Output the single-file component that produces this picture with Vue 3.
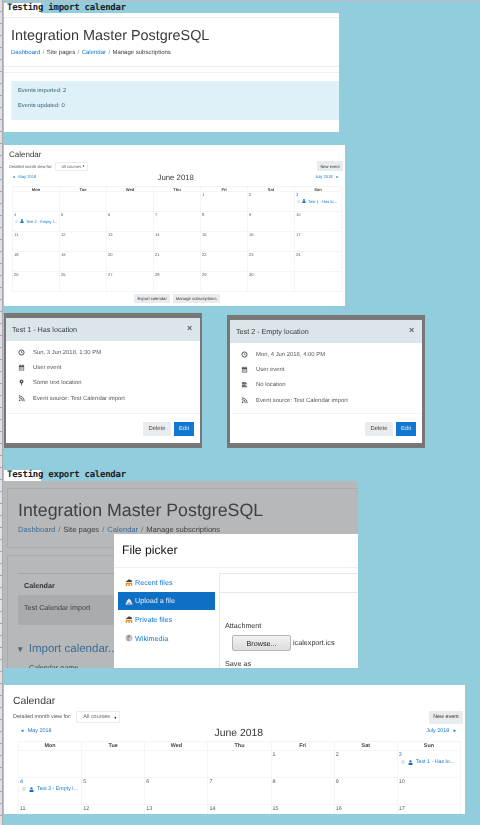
<script setup>
const days = [
  '', '', '', '', 1, 2, 3,
  4, 5, 6, 7, 8, 9, 10,
  11, 12, 13, 14, 15, 16, 17,
  18, 19, 20, 21, 22, 23, 24,
  25, 26, 27, 28, 29, 30, ''
]
const headers = ['Mon', 'Tue', 'Wed', 'Thu', 'Fri', 'Sat', 'Sun']
const modals = [
  {
    key: 'first', title: 'Test 1 - Has location',
    rows: [
      ['clock', 'Sun, 3 Jun 2018, 1:30 PM'],
      ['cal', 'User event'],
      ['pin', 'Some text location'],
      ['rss', 'Event source: Test Calendar import']
    ]
  },
  {
    key: 'second', title: 'Test 2 - Empty location',
    rows: [
      ['clock', 'Mon, 4 Jun 2018, 4:00 PM'],
      ['cal', 'User event'],
      ['list', 'No location'],
      ['rss', 'Event source: Test Calendar import']
    ]
  }
]
const pickerItems = [
  { label: 'Recent files', icon: 'folder' },
  { label: 'Upload a file', icon: 'upload', active: true },
  { label: 'Private files', icon: 'folder' },
  { label: 'Wikimedia', icon: 'globe' }
]
</script>

<template>
  <div class="screen">
    <div class="ruler-left"></div>
    <main class="doc">
      <div class="ruler-top"></div>

      <div class="label"><span class="label-white">Testing import calendar</span></div>
      <section class="card result">
        <div class="result-head">
          <h1>Integration Master PostgreSQL</h1>
          <nav class="crumbs">
            <a>Dashboard</a><i>/</i><span>Site pages</span><i>/</i><a>Calendar</a><i>/</i><span>Manage subscriptions</span>
          </nav>
        </div>
        <div class="result-rule"></div>
        <div class="alert">
          <p>Events imported: 2</p>
          <p>Events updated: 0</p>
        </div>
      </section>

      <section class="card cal cal-small">
        <h2>Calendar</h2>
        <div class="cal-tools">
          <span>Detailed month view for:</span>
          <span class="select">All courses <b>♦</b></span>
          <span class="new-event">New event</span>
        </div>
        <div class="cal-nav">
          <a class="prev"><b>◄</b> May 2018</a>
          <span class="month">June 2018</span>
          <a class="next">July 2018 <b>►</b></a>
        </div>
        <div class="grid">
          <div v-for="h in headers" :key="h" class="head">{{ h }}</div>
          <div v-for="(d, i) in days" :key="i" class="cell">
            <span class="num" :class="{ link: d === 3 || d === 4 }">{{ d }}</span>
            <div v-if="d === 3 || d === 4" class="event">
              <span class="dot"></span>
              <svg class="person" viewBox="0 0 10 10"><circle cx="5" cy="2.6" r="2.3" /><path d="M1 10V7.6C1 6.2 2.2 5.4 3.4 5.2L5 6.4 6.6 5.2C7.8 5.4 9 6.2 9 7.6V10Z" /></svg>
              <span class="ev-text">{{ d === 3 ? 'Test 1 - Has lo...' : 'Test 2 - Empty l...' }}</span>
            </div>
          </div>
        </div>
        <div class="cal-foot">
          <span class="btn-soft">Export calendar</span>
          <span class="btn-soft">Manage subscriptions</span>
        </div>
      </section>

      <div class="modals">
        <article v-for="m in modals" :key="m.key" class="modal" :class="m.key">
          <header>
            <span>{{ m.title }}</span>
            <span class="close">×</span>
          </header>
          <div class="modal-body">
            <div v-for="r in m.rows" :key="r[1]" class="mrow">
              <svg viewBox="0 0 12 12" class="micon">
                <g v-if="r[0] === 'clock'"><circle cx="6" cy="6" r="4.4" fill="none" stroke="currentColor" stroke-width="1.6" /><path d="M6 3.4V6.3H8" fill="none" stroke="currentColor" stroke-width="1.1" /></g>
                <g v-else-if="r[0] === 'cal'"><path d="M1.5 2.4H10.5V11H1.5Z" /><path d="M3 1H4.2V3H3ZM7.8 1H9V3H7.8Z" /><path d="M2.6 5H9.4V10H2.6Z" fill="#fff" /><path d="M3.4 5.8H4.8V7H3.4ZM5.4 5.8H6.8V7H5.4ZM7.4 5.8H8.6V7H7.4ZM3.4 7.8H4.8V9H3.4ZM5.4 7.8H6.8V9H5.4ZM7.4 7.8H8.6V9H7.4Z" /></g>
                <g v-else-if="r[0] === 'pin'"><path d="M6 .8A3.3 3.3 0 0 0 2.7 4.1C2.7 6 4.2 7 5.4 7.8V11.2H6.6V7.8C7.8 7 9.3 6 9.3 4.1A3.3 3.3 0 0 0 6 .8Z" /><circle cx="6" cy="3.9" r="1.2" fill="#fff" /></g>
                <g v-else-if="r[0] === 'list'"><path d="M1.5 1.5H8.2V3H1.5ZM1.5 4H10V5.5H1.5ZM1.5 6.5H8.2V8H1.5ZM1.5 9H10.4V10.5H1.5Z" /></g>
                <g v-else><circle cx="2.8" cy="9.2" r="1.4" /><path d="M1.4 4.4A6.2 6.2 0 0 1 7.6 10.6M1.4 1.4A9.2 9.2 0 0 1 10.6 10.6" fill="none" stroke="currentColor" stroke-width="1.5" /></g>
              </svg>
              <span>{{ r[1] }}</span>
            </div>
          </div>
          <footer>
            <span class="m-btn">Delete</span>
            <span class="m-btn primary">Edit</span>
          </footer>
        </article>
      </div>

      <div class="label second-label"><span class="label-white">Testing export calendar</span></div>
      <section class="dim">
        <div class="dim-card dim-head">
          <h1>Integration Master PostgreSQL</h1>
          <nav class="crumbs">
            <a>Dashboard</a><i>/</i><span>Site pages</span><i>/</i><a>Calendar</a><i>/</i><span>Manage subscriptions</span>
          </nav>
        </div>
        <div class="dim-card dim-main">
          <div class="dim-th">Calendar</div>
          <div class="dim-td">Test Calendar import</div>
          <div class="dim-import"><b>▾</b> Import calendar...</div>
          <div class="dim-name">Calendar name</div>
        </div>

        <div class="picker">
          <div class="picker-title">File picker</div>
          <div class="picker-body">
            <ul class="picker-nav">
              <li v-for="p in pickerItems" :key="p.label" :class="{ active: p.active }">
                <svg viewBox="0 0 10 10" class="p-icon">
                  <g v-if="p.icon === 'folder'"><path d="M1 6H9V10H7.4V7.6H6V10H4.2V7.6H2.8V10H1Z" fill="#f08a24" /><path d="M.6 5 5 1.6 8.6 3.2V5H3Z" fill="#444" /></g>
                  <g v-else-if="p.icon === 'upload'"><path d="M.5 9.5 3 4 5 2 7 4 9.5 9.5Z" fill="#e9eef2" /><path d="M1.8 9.5 5 6 8.2 9.5Z" fill="#8aa0b4" /></g>
                  <g v-else><circle cx="5" cy="5" r="4.4" fill="#c9c9c9" /><path d="M3 2 6 1.5 6.5 4 4 5 5 8.5 3 8Z" fill="#8b8b8b" /></g>
                </svg>
                <span>{{ p.label }}</span>
              </li>
            </ul>
            <div class="picker-panel">
              <div class="panel-bar"></div>
              <div class="panel-form">
                <div class="attach">Attachment</div>
                <div class="browse-row"><span class="browse">Browse...</span><span>icalexport.ics</span></div>
                <div class="saveas">Save as</div>
              </div>
            </div>
          </div>
        </div>
      </section>

      <section class="card cal cal-large">
        <h2>Calendar</h2>
        <div class="cal-tools">
          <span>Detailed month view for:</span>
          <span class="select">All courses <b>♦</b></span>
          <span class="new-event">New event</span>
        </div>
        <div class="cal-nav">
          <a class="prev"><b>◄</b> May 2018</a>
          <span class="month">June 2018</span>
          <a class="next">July 2018 <b>►</b></a>
        </div>
        <div class="grid">
          <div v-for="h in headers" :key="h" class="head">{{ h }}</div>
          <div v-for="(d, i) in days" :key="i" class="cell">
            <span class="num" :class="{ link: d === 3 || d === 4 }">{{ d }}</span>
            <div v-if="d === 3 || d === 4" class="event">
              <span class="dot"></span>
              <svg class="person" viewBox="0 0 10 10"><circle cx="5" cy="2.6" r="2.3" /><path d="M1 10V7.6C1 6.2 2.2 5.4 3.4 5.2L5 6.4 6.6 5.2C7.8 5.4 9 6.2 9 7.6V10Z" /></svg>
              <span class="ev-text">{{ d === 3 ? 'Test 1 - Has lo...' : 'Test 2 - Empty l...' }}</span>
            </div>
          </div>
        </div>
      </section>
    </main>
  </div>
</template>

<style scoped>
.screen {
  width: 480px;
  height: 825px;
  overflow: hidden;
  display: flex;
  background: #91cddc;
  font-family: "Liberation Sans", Arial, sans-serif;
  color: #373a3c;
  text-rendering: geometricPrecision;
}
.ruler-left {
  flex: 0 0 3px;
  margin-right: 1px;
  background: repeating-linear-gradient(180deg, #dfe0e6 0 11px, #a8a8ae 11px 12px);
  border-right: 1px solid #a8a8ae;
  box-sizing: border-box;
  height: 825px;
}
.doc { flex: 1; min-width: 0; }
.ruler-top {
  height: 3px;
  background:
    linear-gradient(#b9bcc0 0 1px, transparent 1px),
    repeating-linear-gradient(90deg, transparent 0 37px, #b9c9d0 37px 38px);
}
.label {
  height: 10px;
  font: bold 9px/11px "DejaVu Sans Mono", monospace;
  letter-spacing: -.25px;
  color: #1c2024;
  white-space: nowrap;
}
.label-white {
  display: block;
  padding-left: 3px;
  background: linear-gradient(#fff, #fff) no-repeat 0 0 / 37px 100%;
}
.second-label { height: 11px; margin-top: 22px; }

.card { background: #fff; filter: blur(.35px); }
.cal > h2, .cal-tools, .cal-nav, .cal-foot, .modal header > span, .mrow, .m-btn { will-change: transform; }
h1, h2, p, ul { margin: 0; padding: 0; font-weight: 400; }

.result { width: 335px; height: 119px; padding-top: 4px; box-sizing: border-box; overflow: hidden; }
.result-head {
  height: 50px;
  padding: 10px 0 0 7px;
  box-sizing: border-box;
  border-top: 1px solid #eee;
  border-bottom: 1px solid #eee;
}
.result-head h1 { font-size: 14.4px; line-height: 17px; }
.result .crumbs { font-size: 6px; margin-top: 5px; }
.crumbs a { color: #1177d1; }
.crumbs i { font-style: normal; color: #818a91; margin: 0 2.4px; }
.result-rule { height: 1px; background: #eee; margin-top: 5px; }
.alert {
  margin: 8px 0 0 7px;
  height: 39px;
  padding: 6px 6px;
  box-sizing: border-box;
  background: #def1f8;
  color: #2b5e70;
  font-size: 5.8px;
  border-left: 1px solid #eaf5f9;
}
.alert p { line-height: 8px; margin-bottom: 7px; }

.cal { box-sizing: border-box; overflow: hidden; position: relative; }
.cal h2 { color: #373a3c; }
.cal-small { width: 341px; height: 161px; margin-top: 13px; padding: 4px 0 0 5px; filter: blur(.4px); }
.cal-small h2 { font-size: 8px; line-height: 11px; }
.cal-small .cal-tools { height: 10px; margin-top: 1px; font-size: 4.05px; gap: 3px; }
.cal-small .select { width: 33px; height: 9px; padding-left: 5px; }
.cal-small .cal-nav { width: 331px; margin-left: 1px; height: 15px; font-size: 4.1px; padding-top: 3px; box-sizing: border-box; }
.cal-small .month { font-size: 7.8px; margin-top: -1px; }
.cal-small .new-event { width: 26px; height: 10px; margin-right: 2px; }
.cal-small .grid {
  margin-left: 3px;
  width: 329px;
  grid-template-rows: 5px repeat(5, 20px);
}
.cal-small .head { font-size: 4.1px; }
.cal-small .cell { font-size: 4.1px; padding: 1px 1px; }
.cal-small .event { font-size: 4px; margin-top: 1px; padding-left: 1px; gap: 2px; }
.cal-small .dot { width: 3px; height: 3px; }
.cal-small .person { width: 4px; height: 4px; }
.cal-foot { display: flex; justify-content: center; gap: 3px; margin-top: 2px; }
.btn-soft {
  background: #e9ecef;
  font-size: 4.2px;
  height: 9px;
  line-height: 9px;
  padding: 0 3px;
  color: #373a3c;
}

.cal-large { width: 461px; height: 129px; margin-top: 17px; padding: 9px 0 0 9px; }
.cal-large h2 { font-size: 10.4px; line-height: 15px; }
.cal-large .cal-tools { height: 14px; margin-top: 1px; font-size: 5.45px; gap: 5px; }
.cal-large .select { width: 44px; height: 12px; padding-left: 6px; }
.cal-large .cal-nav { width: 441px; margin-left: 5px; height: 17px; font-size: 5.4px; padding-top: 4px; box-sizing: border-box; }
.cal-large .month { font-size: 10.4px; }
.cal-large .new-event { width: 34px; height: 13px; margin-right: 2px; }
.cal-large .grid {
  margin-left: 5px;
  width: 442px;
  grid-template-rows: 9px repeat(5, 27px);
}
.cal-large .head { font-size: 5.4px; }
.cal-large .cell { font-size: 5.4px; padding: 1px 1px; }
.cal-large .event { font-size: 5.3px; margin-top: 1px; padding-left: 2px; gap: 3px; }
.cal-large .dot { width: 4px; height: 4px; }
.cal-large .person { width: 5px; height: 5px; }

.cal-tools { display: flex; align-items: center; color: #555; white-space: nowrap; }
.select {
  display: inline-flex;
  align-items: center;
  justify-content: space-between;
  box-sizing: border-box;
  padding-right: 3px;
  border: 1px solid #ececec;
  border-radius: 1px;
  color: #666;
}
.select b { font-size: .8em; color: #333; }
.new-event {
  margin-left: auto;
  background: #e9ecef;
  color: #373a3c;
  display: flex;
  align-items: center;
  justify-content: center;
  flex: none;
}
.cal-nav { display: flex; justify-content: space-between; align-items: flex-start; color: #1177d1; }
.cal-nav b { font-size: .8em; margin: 0 2px; color: #0f6cbf; }
.month { color: #373a3c; }
.grid {
  display: grid;
  grid-template-columns: repeat(7, 1fr);
  border-top: 1px solid #f5f5f5;
  border-left: 1px solid #f5f5f5;
  will-change: transform;
}
.head, .cell { border-right: 1px solid #f5f5f5; border-bottom: 1px solid #f5f5f5; box-sizing: border-box; min-width: 0; }
.head { text-align: center; font-weight: 700; color: #444; display: flex; align-items: center; justify-content: center; }
.cell { color: #555; overflow: hidden; }
.num { display: block; line-height: 1.2; }
.num.link { color: #1177d1; }
.event { display: flex; align-items: center; color: #1177d1; white-space: nowrap; }
.dot { border-radius: 50%; background: #d9e4ea; flex: none; }
.person { fill: #0f6cbf; flex: none; }

.modals { display: flex; align-items: flex-end; gap: 25px; margin-top: 7px; height: 135px; }
.modal {
  width: 198px;
  background: #fff;
  border: 2px solid #777;
  box-sizing: border-box;
  display: flex;
  flex-direction: column;
  filter: blur(.3px);
  border-bottom-width: 5px;
  overflow: hidden;
}
.modal.first { height: 135px; border-top-width: 5px; }
.modal.second { height: 133px; border-top-width: 5px; border-left-width: 3px; border-right-width: 3px; }
.modal header {
  height: 23px;
  flex: none;
  background: #dbe6ea;
  display: flex;
  align-items: center;
  justify-content: space-between;
  padding: 0 8px 0 6px;
  font-size: 7.2px;
  color: #373a3c;
}
.close { font-size: 9px; font-weight: 700; color: #666; margin-top: -3px; }
.modal-body { flex: 1; padding: 4px 0 0 9px; }
.second .modal-body { padding-left: 8px; }
.mrow { display: flex; align-items: center; height: 15.2px; font-size: 5.9px; color: #555; }
.micon { width: 7px; height: 7px; fill: #444; color: #444; margin-right: 8px; margin-left: 3px; flex: none; }
.modal footer {
  height: 29px;
  flex: none;
  border-top: 1px solid #f3f3f3;
  display: flex;
  justify-content: flex-end;
  align-items: center;
  gap: 3px;
  padding-right: 6px;
}
.m-btn {
  width: 28px;
  height: 14px;
  text-align: center;
  line-height: 14px;
  font-size: 5.9px;
  background: #e9ecef;
  color: #444;
}
.m-btn.primary { width: 20px; background: #1177d1; color: #e6f0fa; }

.dim {
  width: 354px;
  height: 187px;
  background: #b6b8ba;
  position: relative;
  overflow: hidden;
  padding: 7px 0 0 3px;
  box-sizing: border-box;
  filter: blur(.3px);
}
.dim-card { border: 1px solid #a9abad; border-right: 0; }
.dim-head { height: 60px; padding: 9px 0 0 10px; box-sizing: border-box; }
.dim-head h1 { font-size: 17.8px; line-height: 24px; color: #3e4144; white-space: nowrap; }
.dim-head .crumbs { font-size: 7.6px; margin-top: 3px; color: #3e4144; }
.dim-head .crumbs a { color: #3b6c95; }
.dim-head .crumbs i { margin: 0 3px; color: #666; }
.dim-main { margin-top: 7px; height: 140px; padding: 17px 0 0 10px; box-sizing: border-box; }
.dim-th {
  height: 23px;
  line-height: 23px;
  font-weight: 700;
  font-size: 7.2px;
  padding-left: 6px;
  border-top: 1px solid #a3a5a7;
  color: #2f3133;
}
.dim-td {
  height: 30px;
  line-height: 26px;
  background: #a9abad;
  font-size: 7.2px;
  padding-left: 6px;
  color: #3e4144;
  margin-top: -2px;
}
.dim-import { margin-top: 16px; font-size: 11.5px; line-height: 16px; color: #3b6c95; white-space: nowrap; }
.dim-import b { color: #5d6a75; font-size: 9px; margin-right: 3px; }
.dim-name { font-size: 7.2px; margin: 6px 0 0 11px; color: #3e4144; }

.picker {
  position: absolute;
  left: 110px;
  top: 53px;
  width: 244px;
  height: 134px;
  background: #fff;
  overflow: hidden;
}
.picker-title {
  height: 34px;
  border-bottom: 1px solid #f0f0f0;
  box-sizing: border-box;
  padding: 8px 0 0 8px;
  font-size: 12.2px;
  line-height: 16px;
  color: #111;
}
.picker-body { display: flex; }
.picker-nav { list-style: none; width: 97px; margin: -15px 0 0 4px; padding-top: 20px; flex: none; }
.picker-nav li {
  height: 18.6px;
  display: flex;
  align-items: center;
  gap: 2px;
  padding-left: 7px;
  font-size: 7.2px;
  color: #1177d1;
}
.picker-nav li.active { background: #0f6fc5; color: #e9f2fb; }
.p-icon { width: 8px; height: 8px; flex: none; }
.picker-panel { flex: 1; margin-left: 4px; border-left: 1px solid #e8e8e8; border-top: 1px solid #e8e8e8; margin-top: 5px; }
.panel-bar { height: 18px; border-bottom: 1px solid #e8e8e8; }
.panel-form { padding: 28px 0 0 5px; font-size: 7.2px; color: #333; }
.attach { line-height: 9px; }
.browse-row { display: flex; align-items: center; gap: 2px; margin: 4px 0 0 7px; height: 17px; white-space: nowrap; }
.browse {
  width: 59px;
  height: 16px;
  line-height: 15px;
  text-align: center;
  box-sizing: border-box;
  border: 1px solid #b5b5b5;
  border-radius: 2px;
  background: linear-gradient(#f2f2f2, #dcdcdc);
  color: #222;
}
.saveas { margin-top: 8px; line-height: 9px; }
</style>
